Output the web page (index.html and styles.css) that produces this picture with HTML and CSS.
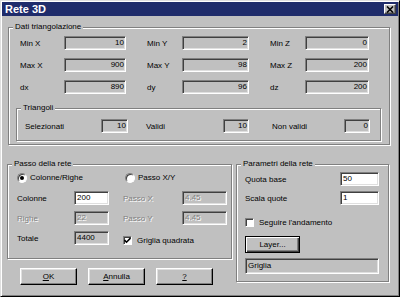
FILE: index.html
```html
<!DOCTYPE html>
<html lang="it">
<head>
<meta charset="utf-8">
<title>Rete 3D</title>
<link rel="stylesheet" href="styles.css">
</head>
<body>
<div class="window">
  <div class="titlebar">
    <span class="title">Rete 3D</span>
    <span class="close"><svg width="8" height="7" viewBox="0 0 8 7"><path d="M1 0.5 L7 6.5 M7 0.5 L1 6.5" stroke="#000" stroke-width="1.6" fill="none"/></svg></span>
  </div>
  <div class="content">
    <div class="group dati">
      <span class="legend">Dati triangolazione</span>
      <div class="grid3">
        <span>Min X</span><span class="field num">10</span><span></span>
        <span>Min Y</span><span class="field num">2</span><span></span>
        <span>Min Z</span><span class="field num">0</span>
        <span>Max X</span><span class="field num">900</span><span></span>
        <span>Max Y</span><span class="field num">98</span><span></span>
        <span>Max Z</span><span class="field num">200</span>
        <span>dx</span><span class="field num">890</span><span></span>
        <span>dy</span><span class="field num">96</span><span></span>
        <span>dz</span><span class="field num">200</span>
      </div>
      <div class="group tri">
        <span class="legend">Triangoli</span>
        <div class="tri-grid">
          <span>Selezionati</span><span class="field num">10</span><span></span>
          <span>Validi</span><span class="field num">10</span><span></span>
          <span>Non validi</span><span class="field num">0</span>
        </div>
      </div>
    </div>

    <div class="lower">
      <div class="left-col">
        <div class="group passo">
          <span class="legend">Passo della rete</span>
          <div class="radios">
            <span class="option first"><span class="radio"><span class="dot"></span></span>Colonne/Righe</span>
            <span class="option"><span class="radio"></span>Passo X/Y</span>
          </div>
          <div class="passo-grid">
            <span>Colonne</span><span class="field white">200</span><span></span>
            <span class="dis">Passo X</span><span class="field dis">4.45</span>
            <span class="dis">Righe</span><span class="field dis">22</span><span></span>
            <span class="dis">Passo Y</span><span class="field dis">4.45</span>
            <span>Totale</span><span class="field">4400</span><span></span>
            <span class="check-row wide"><span class="checkbox"><svg width="7" height="7" viewBox="0 0 7 7"><path d="M0.5 3 L2.5 5.2 L6.5 1" stroke="#000" stroke-width="1.6" fill="none"/></svg></span>Griglia quadrata</span>
          </div>
        </div>
        <div class="buttons">
          <button class="btn"><u>O</u>K</button>
          <button class="btn"><u>A</u>nnulla</button>
          <button class="btn"><u>?</u></button>
        </div>
      </div>

      <div class="group params">
        <span class="legend">Parametri della rete</span>
        <div class="params-inner">
          <div class="params-grid">
            <span>Quota base</span><span class="field white">50</span>
            <span>Scala quote</span><span class="field white">1</span>
          </div>
          <span class="check-row seguire"><span class="checkbox"></span>Seguire l'andamento</span>
          <button class="btn default layer">Layer...</button>
          <span class="field griglia">Griglia</span>
        </div>
      </div>
    </div>
  </div>
</div>
</body>
</html>
```
FILE: styles.css
```css
* { box-sizing: border-box; margin: 0; padding: 0; }
html, body { width: 400px; height: 297px; overflow: hidden; background: #c0c0c0; }
body {
  font-family: "Liberation Sans", Arial, sans-serif;
  font-size: 8px;
  color: #000;
}
.window {
  width: 400px;
  height: 297px;
  background: #c0c0c0;
  border: 1px solid;
  border-color: #dfdfdf #000 #000 #dfdfdf;
  box-shadow: inset 1px 1px #fff, inset -1px -1px #808080;
  padding: 1px;
}
.titlebar {
  height: 14px;
  background: #1f2c6b;
  display: flex;
  align-items: center;
  justify-content: space-between;
  padding: 0 2px 0 3px;
}
.title { color: #fff; font-weight: bold; font-size: 11px; line-height: 14px; }
.close {
  width: 12px;
  height: 10px;
  background: #c0c0c0;
  border: 1px solid;
  border-color: #fff #404040 #404040 #fff;
  box-shadow: inset -1px -1px #808080;
  display: flex;
  align-items: center;
  justify-content: center;
}
.close svg { display: block; }
.content { padding: 11px 0 0 6px; }

.group {
  border: 1px solid #808080;
  box-shadow: 1px 1px 0 #fff, inset 1px 1px 0 #fff;
}
.legend {
  display: block;
  width: fit-content;
  height: 10px;
  line-height: 10px;
  margin: -6px 0 0 4px;
  padding: 0 2px;
  background: #c0c0c0;
  white-space: nowrap;
}

.dati { width: 382px; padding-bottom: 3px; }
.grid3 {
  display: grid;
  grid-template-columns: 44px 62px 21px 35px 67px 21px 35px 64px;
  grid-auto-rows: 14px;
  row-gap: 8px;
  margin: 4px 0 0 11px;
  align-items: center;
}
.tri { width: 365px; margin: 14px 0 0 7px; padding-bottom: 7px; }
.tri-grid {
  display: grid;
  grid-template-columns: 76px 27px 18px 77px 26px 23px 72px 26px;
  grid-auto-rows: 14px;
  margin: 6px 0 0 8px;
  align-items: center;
}

.field {
  display: block;
  height: 14px;
  line-height: 12px;
  border: 1px solid;
  border-color: #808080 #fff #fff #808080;
  box-shadow: inset 1px 1px #404040, inset -1px -1px #dfdfdf;
  padding: 0 1px 0 2px;
  white-space: nowrap;
  overflow: hidden;
}
.num { text-align: right; }
.white { background: #fff; }
.dis { color: #808080; text-shadow: 1px 1px 0 #fff; }

.lower { display: flex; gap: 4px; margin: 19px 0 0 -1px; align-items: flex-start; }
.left-col { width: 225px; }
.passo { padding-bottom: 13px; }
.radios { display: flex; align-items: center; height: 11px; margin: 3px 0 0 9px; }
.option { display: flex; align-items: center; }
.option.first { width: 108px; }
.radio {
  width: 10px;
  height: 10px;
  border-radius: 50%;
  background: #fff;
  border: 1px solid;
  border-color: #808080 #fff #fff #808080;
  box-shadow: inset 1px 1px #404040;
  display: flex;
  align-items: center;
  justify-content: center;
  margin-right: 3px;
}
.dot { width: 4px; height: 4px; border-radius: 50%; background: #000; }

.passo-grid {
  display: grid;
  grid-template-columns: 57px 35px 14px 59px 45px;
  grid-auto-rows: 14px;
  row-gap: 6px;
  margin: 8px 0 0 9px;
  align-items: center;
}
.check-row { display: flex; align-items: center; height: 9px; line-height: 9px; white-space: nowrap; }
.wide { grid-column: 4 / 6; align-self: end; }
.checkbox {
  width: 9px;
  height: 9px;
  background: #fff;
  border: 1px solid;
  border-color: #808080 #fff #fff #808080;
  box-shadow: inset 1px 1px #404040;
  display: flex;
  align-items: center;
  justify-content: center;
  margin-right: 5px;
}
.checkbox svg { display: block; }

.buttons { display: flex; gap: 11px; margin-top: 9px; padding-left: 13px; }
.btn {
  width: 57px;
  height: 17px;
  font: inherit;
  color: #000;
  background: #c0c0c0;
  border: 1px solid;
  border-color: #fff #000 #000 #fff;
  box-shadow: inset -1px -1px #808080, inset 1px 1px #dfdfdf;
  display: flex;
  align-items: center;
  justify-content: center;
}
.btn.default {
  border: 1px solid #000;
  box-shadow: inset 1px 1px #fff, inset -1px -1px #404040, inset -2px -2px #808080;
}

.params { width: 153px; padding-bottom: 7px; }
.params-inner { padding-left: 8px; display: flex; flex-direction: column; align-items: flex-start; }
.params-grid {
  display: grid;
  grid-template-columns: 95px 39px;
  grid-auto-rows: 14px;
  row-gap: 5px;
  margin-top: 3px;
  align-items: center;
}
.seguire { margin-top: 13px; }
.layer { width: 55px; margin-top: 9px; }
.griglia { width: 134px; height: 16px; line-height: 14px; margin-top: 5px; }
```
